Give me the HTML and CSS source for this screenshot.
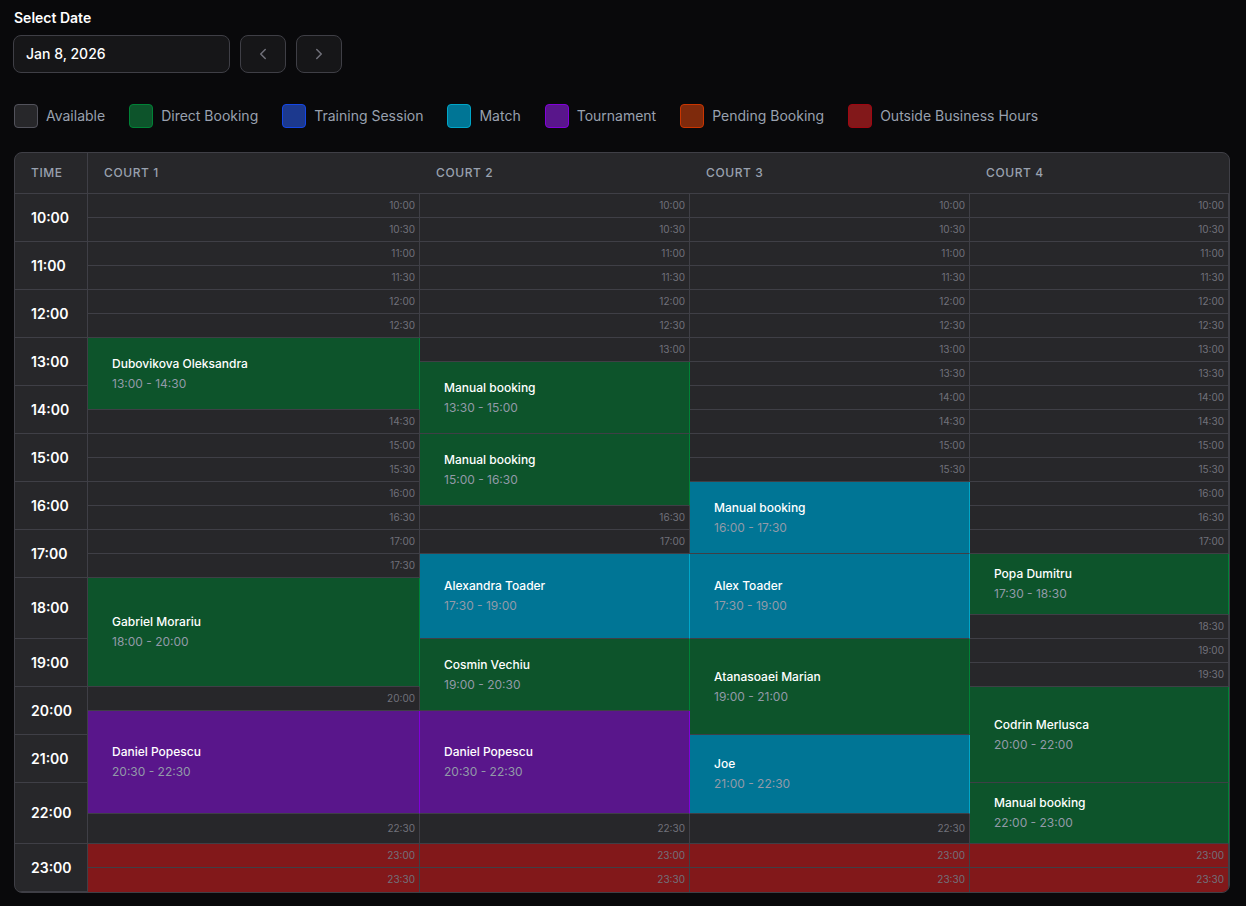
FILE: index.html
```html
<!DOCTYPE html>
<html lang="en">
<head>
    <meta charset="UTF-8">
    <meta name="viewport" content="width=device-width, initial-scale=1.0">
    <title>Court Schedule</title>
    <link rel="stylesheet" href="styles.css">
</head>
<body>
    <div class="date-picker">
        <label class="date-label">Select Date</label>
        <div class="date-controls">
            <button class="date-input">Jan 8, 2026</button>
            <button class="nav-btn" aria-label="Previous day">
                <svg width="18" height="18" viewBox="0 0 24 24" fill="none" stroke="currentColor" stroke-width="2" stroke-linecap="round" stroke-linejoin="round"><path d="m15 18-6-6 6-6"/></svg>
            </button>
            <button class="nav-btn" aria-label="Next day">
                <svg width="18" height="18" viewBox="0 0 24 24" fill="none" stroke="currentColor" stroke-width="2" stroke-linecap="round" stroke-linejoin="round"><path d="m9 18 6-6-6-6"/></svg>
            </button>
        </div>
    </div>

    <div class="legend">
        <div class="legend-item"><span class="swatch swatch-available"></span>Available</div>
        <div class="legend-item"><span class="swatch swatch-direct"></span>Direct Booking</div>
        <div class="legend-item"><span class="swatch swatch-training"></span>Training Session</div>
        <div class="legend-item"><span class="swatch swatch-match"></span>Match</div>
        <div class="legend-item"><span class="swatch swatch-tournament"></span>Tournament</div>
        <div class="legend-item"><span class="swatch swatch-pending"></span>Pending Booking</div>
        <div class="legend-item"><span class="swatch swatch-outside"></span>Outside Business Hours</div>
    </div>

    <div class="schedule">
        <table>
            <colgroup>
                <col class="col-time">
                <col class="col-c1">
                <col class="col-c2">
                <col class="col-c3">
                <col class="col-c4">
            </colgroup>
            <thead>
                <tr>
                    <th class="th-time">Time</th>
                    <th>Court 1</th>
                    <th>Court 2</th>
                    <th>Court 3</th>
                    <th>Court 4</th>
                </tr>
            </thead>
            <tbody>
                <tr>
                    <td class="hour" rowspan="2">10:00</td>
                    <td class="slot">10:00</td><td class="slot">10:00</td><td class="slot">10:00</td><td class="slot">10:00</td>
                </tr>
                <tr>
                    <td class="slot">10:30</td><td class="slot">10:30</td><td class="slot">10:30</td><td class="slot">10:30</td>
                </tr>
                <tr>
                    <td class="hour" rowspan="2">11:00</td>
                    <td class="slot">11:00</td><td class="slot">11:00</td><td class="slot">11:00</td><td class="slot">11:00</td>
                </tr>
                <tr>
                    <td class="slot">11:30</td><td class="slot">11:30</td><td class="slot">11:30</td><td class="slot">11:30</td>
                </tr>
                <tr>
                    <td class="hour" rowspan="2">12:00</td>
                    <td class="slot">12:00</td><td class="slot">12:00</td><td class="slot">12:00</td><td class="slot">12:00</td>
                </tr>
                <tr>
                    <td class="slot">12:30</td><td class="slot">12:30</td><td class="slot">12:30</td><td class="slot">12:30</td>
                </tr>
                <tr>
                    <td class="hour" rowspan="2">13:00</td>
                    <td class="booking direct" rowspan="3"><div class="name">Dubovikova Oleksandra</div><div class="range">13:00 - 14:30</div></td>
                    <td class="slot">13:00</td><td class="slot">13:00</td><td class="slot">13:00</td>
                </tr>
                <tr>
                    <td class="booking direct" rowspan="3"><div class="name">Manual booking</div><div class="range">13:30 - 15:00</div></td>
                    <td class="slot">13:30</td><td class="slot">13:30</td>
                </tr>
                <tr>
                    <td class="hour" rowspan="2">14:00</td>
                    <td class="slot">14:00</td><td class="slot">14:00</td>
                </tr>
                <tr>
                    <td class="slot">14:30</td><td class="slot">14:30</td><td class="slot">14:30</td>
                </tr>
                <tr>
                    <td class="hour" rowspan="2">15:00</td>
                    <td class="slot">15:00</td>
                    <td class="booking direct" rowspan="3"><div class="name">Manual booking</div><div class="range">15:00 - 16:30</div></td>
                    <td class="slot">15:00</td><td class="slot">15:00</td>
                </tr>
                <tr>
                    <td class="slot">15:30</td><td class="slot">15:30</td><td class="slot">15:30</td>
                </tr>
                <tr>
                    <td class="hour" rowspan="2">16:00</td>
                    <td class="slot">16:00</td>
                    <td class="booking match" rowspan="3"><div class="name">Manual booking</div><div class="range">16:00 - 17:30</div></td>
                    <td class="slot">16:00</td>
                </tr>
                <tr>
                    <td class="slot">16:30</td><td class="slot">16:30</td><td class="slot">16:30</td>
                </tr>
                <tr>
                    <td class="hour" rowspan="2">17:00</td>
                    <td class="slot">17:00</td><td class="slot">17:00</td><td class="slot">17:00</td>
                </tr>
                <tr>
                    <td class="slot">17:30</td>
                    <td class="booking match" rowspan="3"><div class="name">Alexandra Toader</div><div class="range">17:30 - 19:00</div></td>
                    <td class="booking match" rowspan="3"><div class="name">Alex Toader</div><div class="range">17:30 - 19:00</div></td>
                    <td class="booking direct" rowspan="2"><div class="name">Popa Dumitru</div><div class="range">17:30 - 18:30</div></td>
                </tr>
                <tr class="row-18">
                    <td class="hour" rowspan="2">18:00</td>
                    <td class="booking direct" rowspan="4"><div class="name">Gabriel Morariu</div><div class="range">18:00 - 20:00</div></td>
                </tr>
                <tr>
                    <td class="slot">18:30</td>
                </tr>
                <tr>
                    <td class="hour" rowspan="2">19:00</td>
                    <td class="booking direct" rowspan="3"><div class="name">Cosmin Vechiu</div><div class="range">19:00 - 20:30</div></td>
                    <td class="booking direct" rowspan="4"><div class="name">Atanasoaei Marian</div><div class="range">19:00 - 21:00</div></td>
                    <td class="slot">19:00</td>
                </tr>
                <tr>
                    <td class="slot">19:30</td>
                </tr>
                <tr>
                    <td class="hour" rowspan="2">20:00</td>
                    <td class="slot">20:00</td>
                    <td class="booking direct" rowspan="4"><div class="name">Codrin Merlusca</div><div class="range">20:00 - 22:00</div></td>
                </tr>
                <tr>
                    <td class="booking tournament" rowspan="4"><div class="name">Daniel Popescu</div><div class="range">20:30 - 22:30</div></td>
                    <td class="booking tournament" rowspan="4"><div class="name">Daniel Popescu</div><div class="range">20:30 - 22:30</div></td>
                </tr>
                <tr>
                    <td class="hour" rowspan="2">21:00</td>
                    <td class="booking match" rowspan="3"><div class="name">Joe</div><div class="range">21:00 - 22:30</div></td>
                </tr>
                <tr></tr>
                <tr class="row-22">
                    <td class="hour" rowspan="2">22:00</td>
                    <td class="booking direct" rowspan="2"><div class="name">Manual booking</div><div class="range">22:00 - 23:00</div></td>
                </tr>
                <tr class="row-2230">
                    <td class="slot">22:30</td><td class="slot">22:30</td><td class="slot">22:30</td>
                </tr>
                <tr>
                    <td class="hour" rowspan="2">23:00</td>
                    <td class="slot outside">23:00</td><td class="slot outside">23:00</td><td class="slot outside">23:00</td><td class="slot outside">23:00</td>
                </tr>
                <tr class="row-last">
                    <td class="slot outside">23:30</td><td class="slot outside">23:30</td><td class="slot outside">23:30</td><td class="slot outside">23:30</td>
                </tr>
            </tbody>
        </table>
    </div>
</body>
</html>
```

FILE: styles.css
```css
body {
    margin: 0;
    padding: 10px 16px 0 14px;
    background-color: #09090b;
    color: #fff;
    font-family: Inter, "Noto Sans", sans-serif;
}
.date-picker {
    margin-bottom: 31px;
}
.date-label {
    display: block;
    font-size: 14px;
    font-weight: 600;
    line-height: 16px;
    margin-bottom: 9px;
}
.date-controls {
    display: flex;
    gap: 10px;
    margin-left: -1px;
}
.date-input {
    width: 217px;
    height: 38px;
    padding: 0 12px 2px;
    text-align: left;
    background-color: #161618;
    border: 1px solid #3f3f46;
    border-radius: 8px;
    color: #fff;
    font-family: inherit;
    font-size: 14px;
    font-weight: 500;
}
.nav-btn {
    display: flex;
    align-items: center;
    justify-content: center;
    width: 46px;
    height: 38px;
    padding: 0;
    background-color: #161618;
    border: 1px solid #3f3f46;
    border-radius: 8px;
    color: #71717a;
}
.legend {
    display: flex;
    gap: 24px;
    margin-bottom: 24px;
}
.legend-item {
    display: flex;
    align-items: center;
    gap: 8px;
    height: 24px;
    font-size: 14px;
    line-height: 16px;
    color: #99a1af;
}
.swatch {
    width: 24px;
    height: 24px;
    box-sizing: border-box;
    border: 1px solid;
    border-radius: 4px;
}
.swatch-available { background-color: #27272a; border-color: #52525b; }
.swatch-direct { background-color: #0d542b; border-color: #008236; }
.swatch-training { background-color: #1c398e; border-color: #1447e6; }
.swatch-match { background-color: #007595; border-color: #00a6c8; }
.swatch-tournament { background-color: #59168b; border-color: #8200db; }
.swatch-pending { background-color: #7e2a0c; border-color: #ca3500; }
.swatch-outside { background-color: #82181a; border-color: #9f0712; }

.schedule {
    width: 1214px;
    background-color: #27272a;
    border: 1px solid #3f3f46;
    border-radius: 8px;
    overflow: hidden;
}
table {
    width: 1214px;
    table-layout: fixed;
    border-collapse: separate;
    border-spacing: 0;
}
.col-time { width: 73px; }
.col-c1 { width: 332px; }
.col-c2 { width: 270px; }
.col-c3 { width: 280px; }
.col-c4 { width: 259px; }
th {
    height: 41px;
    padding: 0 0 2px 16px;
    box-sizing: border-box;
    text-align: left;
    font-size: 12px;
    font-weight: 500;
    letter-spacing: 0.05em;
    text-transform: uppercase;
    color: #99a1af;
    border-bottom: 1px solid #3f3f46;
}
.th-time {
    border-right: 1px solid #3f3f46;
}
tr {
    height: 24px;
}
.row-18 { height: 37px; }
.row-22 { height: 31px; }
.row-2230 { height: 30px; }
td {
    padding: 0;
    border-right: 1px solid #3f3f46;
    border-bottom: 1px solid #3f3f46;
}
.row-last td {
    border-bottom: none;
}
.hour {
    padding-left: 16px;
    font-size: 14px;
    font-weight: 600;
    color: #fff;
}
.row-18 .hour,
.row-22 .hour {
    padding-bottom: 2px;
}
.slot {
    padding: 0 4px 2px 0;
    text-align: right;
    font-size: 10px;
    line-height: 12px;
    color: #71717a;
}
.outside {
    background-color: #82181a;
}
.booking {
    padding-left: 24px;
    vertical-align: middle;
}
.name {
    font-size: 12px;
    font-weight: 500;
    line-height: 16px;
    color: #fff;
    margin-bottom: 4px;
}
.range {
    font-size: 12px;
    line-height: 16px;
    color: #929aa8;
}
.direct { background-color: #0d542b; border-right-color: #008236; }
.match { background-color: #007595; border-right-color: #00a6c8; }
.tournament { background-color: #59168b; border-right-color: #8200db; }
```
